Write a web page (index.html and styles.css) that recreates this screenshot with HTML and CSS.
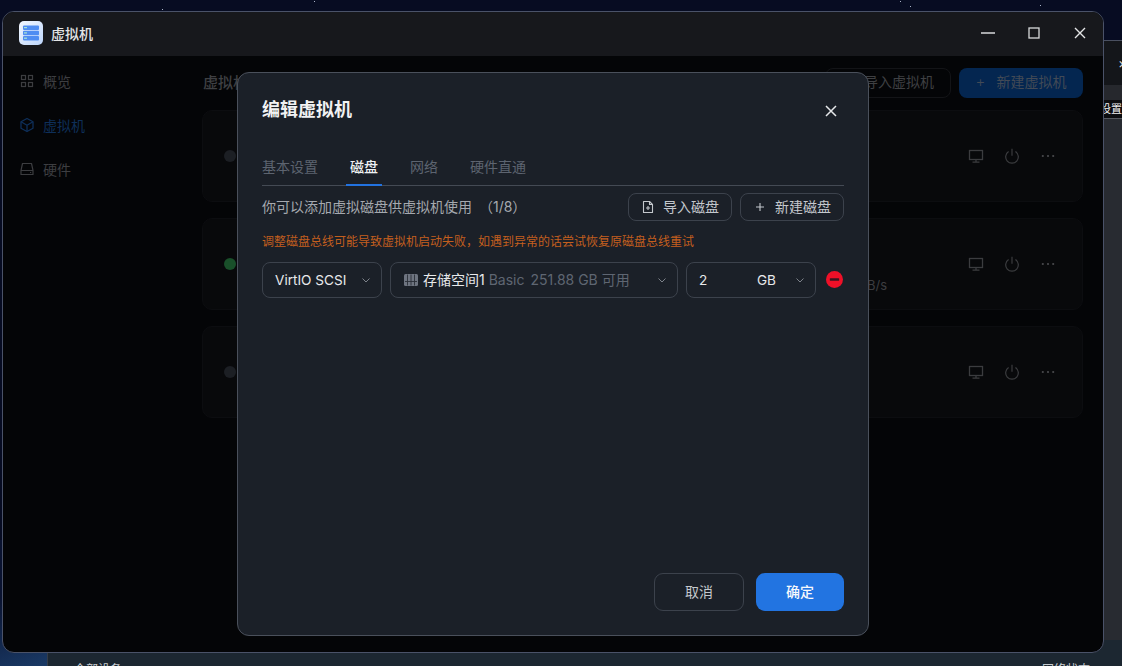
FILE: index.html
```html
<!DOCTYPE html>
<html lang="zh-CN">
<head>
<meta charset="utf-8">
<title>虚拟机</title>
<link rel="stylesheet" href="styles.css">
</head>
<body>
<div class="desktop">
  <i class="star s1"></i><i class="star s2"></i><i class="star s3"></i><i class="star s4"></i><i class="star s5"></i>
  <div class="corner-art"></div>

  <section class="back-window">
    <div class="back-head"><span class="back-close">×</span></div>
    <div class="back-strip"></div>
    <div class="back-tab">设置</div>
    <div class="back-body"></div>
  </section>

  <section class="bottom-window">
    <span class="bottom-left">全部设备</span>
    <span class="bottom-right">网络状态</span>
  </section>

  <section class="window">
    <header class="titlebar">
      <svg class="app-icon" viewBox="0 0 24 24" width="24" height="24">
        <defs>
          <linearGradient id="appbg" x1="0" y1="0" x2="1" y2="1"><stop offset="0" stop-color="#f4f8ff"/><stop offset="1" stop-color="#bcd5fb"/></linearGradient>
        </defs>
        <rect width="24" height="24" rx="5" fill="url(#appbg)"/>
        <rect x="4" y="4.5" width="16" height="4.4" rx="1" fill="#4f8df2"/>
        <rect x="4" y="9.8" width="16" height="4.4" rx="1" fill="#4f8df2"/>
        <rect x="4" y="15.1" width="16" height="4.4" rx="1" fill="#4f8df2"/>
        <rect x="5" y="6" width="3" height="1.2" fill="#a9e6d0"/>
        <rect x="5" y="11.3" width="3" height="1.2" fill="#a9e6d0"/>
        <rect x="5" y="16.6" width="3" height="1.2" fill="#a9e6d0"/>
      </svg>
      <span class="app-name">虚拟机</span>
      <div class="win-controls">
        <svg viewBox="0 0 16 16" width="16" height="16"><path d="M1 8h14" stroke="#d8d9db" stroke-width="1.4"/></svg>
        <svg viewBox="0 0 16 16" width="16" height="16"><rect x="3" y="3" width="10" height="10" fill="none" stroke="#d8d9db" stroke-width="1.3"/></svg>
        <svg viewBox="0 0 16 16" width="16" height="16"><path d="M3 3l10 10M13 3L3 13" stroke="#e4e5e7" stroke-width="1.4"/></svg>
      </div>
    </header>
    <div class="win-body">
      <nav class="sidebar">
        <a class="nav-item">
          <svg viewBox="0 0 16 16" width="16" height="16" fill="none" stroke="#3c3d40" stroke-width="1.2"><rect x="2.5" y="2.5" width="4" height="4"/><rect x="9.5" y="2.5" width="4" height="4"/><rect x="2.5" y="9.5" width="4" height="4"/><rect x="9.5" y="9.5" width="4" height="4"/></svg>
          <span>概览</span>
        </a>
        <a class="nav-item active">
          <svg viewBox="0 0 16 16" width="16" height="16" fill="none" stroke="#0e2f59" stroke-width="1.3" stroke-linejoin="round"><path d="M8 1.5l6 3.3v6.4l-6 3.3-6-3.3V4.8z"/><path d="M2 4.8l6 3.4 6-3.4M8 8.2v6.3"/></svg>
          <span>虚拟机</span>
        </a>
        <a class="nav-item">
          <svg viewBox="0 0 16 16" width="16" height="16" fill="none" stroke="#3c3d40" stroke-width="1.2" stroke-linejoin="round"><path d="M3.5 2.5h9l1.5 7v4H2v-4z"/><path d="M2 9.5h12"/><path d="M11 11.5h1.2"/></svg>
          <span>硬件</span>
        </a>
      </nav>
      <main class="content">
        <div class="content-head">
          <h2 class="content-title">虚拟机</h2>
          <div class="content-actions">
            <button class="bg-btn ghost">导入虚拟机</button>
            <button class="bg-btn primary"><span class="plus">+</span>新建虚拟机</button>
          </div>
        </div>
        <div class="vm-list">
          <article class="vm-card">
            <i class="dot"></i>
            <div class="vm-tools">
              <svg class="tool" viewBox="0 0 16 16" width="16" height="16" fill="none" stroke="#3b3c3f" stroke-width="1.3"><rect x="1.5" y="2.5" width="13" height="9"/><path d="M8 11.5v2.5M4.5 14.2h7"/></svg>
              <svg class="tool" viewBox="0 0 16 16" width="16" height="16" fill="none" stroke="#3b3c3f" stroke-width="1.2"><path d="M4.6 3.6a6.3 6.3 0 1 0 6.8 0"/><path d="M8 .8v7"/></svg>
              <svg class="tool" viewBox="0 0 16 16" width="16" height="16" fill="#4a4b4e"><circle cx="2.8" cy="8" r="1.1"/><circle cx="8" cy="8" r="1.1"/><circle cx="13.2" cy="8" r="1.1"/></svg>
            </div>
          </article>
          <article class="vm-card">
            <i class="dot on"></i>
            <span class="vm-speed">B/s</span>
            <div class="vm-tools">
              <svg class="tool" viewBox="0 0 16 16" width="16" height="16" fill="none" stroke="#3b3c3f" stroke-width="1.3"><rect x="1.5" y="2.5" width="13" height="9"/><path d="M8 11.5v2.5M4.5 14.2h7"/></svg>
              <svg class="tool" viewBox="0 0 16 16" width="16" height="16" fill="none" stroke="#3b3c3f" stroke-width="1.2"><path d="M4.6 3.6a6.3 6.3 0 1 0 6.8 0"/><path d="M8 .8v7"/></svg>
              <svg class="tool" viewBox="0 0 16 16" width="16" height="16" fill="#4a4b4e"><circle cx="2.8" cy="8" r="1.1"/><circle cx="8" cy="8" r="1.1"/><circle cx="13.2" cy="8" r="1.1"/></svg>
            </div>
          </article>
          <article class="vm-card">
            <i class="dot"></i>
            <div class="vm-tools">
              <svg class="tool" viewBox="0 0 16 16" width="16" height="16" fill="none" stroke="#3b3c3f" stroke-width="1.3"><rect x="1.5" y="2.5" width="13" height="9"/><path d="M8 11.5v2.5M4.5 14.2h7"/></svg>
              <svg class="tool" viewBox="0 0 16 16" width="16" height="16" fill="none" stroke="#3b3c3f" stroke-width="1.2"><path d="M4.6 3.6a6.3 6.3 0 1 0 6.8 0"/><path d="M8 .8v7"/></svg>
              <svg class="tool" viewBox="0 0 16 16" width="16" height="16" fill="#4a4b4e"><circle cx="2.8" cy="8" r="1.1"/><circle cx="8" cy="8" r="1.1"/><circle cx="13.2" cy="8" r="1.1"/></svg>
            </div>
          </article>
        </div>
      </main>
    </div>
  </section>

  <section class="modal">
    <div class="modal-head">
      <h1 class="modal-title">编辑虚拟机</h1>
      <svg class="modal-close" viewBox="0 0 16 16" width="16" height="16"><path d="M3 3l10 10M13 3L3 13" stroke="#e6e8ea" stroke-width="1.5"/></svg>
    </div>
    <div class="tabs">
      <span class="tab">基本设置</span>
      <span class="tab current">磁盘</span>
      <span class="tab">网络</span>
      <span class="tab">硬件直通</span>
    </div>
    <div class="toolbar">
      <span class="hint">你可以添加虚拟磁盘供虚拟机使用 （1/8）</span>
      <div class="toolbar-btns">
        <button class="btn small">
          <svg viewBox="0 0 14 14" width="14" height="14" fill="none" stroke="#c4c8cd" stroke-width="1.1" stroke-linejoin="round"><path d="M2.5 1.5h6l3 3v8h-9z"/><path d="M8.5 1.5v3h3M7 6v4M5 8h4"/></svg>
          <span class="btn-label">导入磁盘</span>
        </button>
        <button class="btn small">
          <svg viewBox="0 0 14 14" width="14" height="14" fill="none" stroke="#c4c8cd" stroke-width="1.1"><path d="M7 3v8M3 7h8"/></svg>
          <span class="btn-label">新建磁盘</span>
        </button>
      </div>
    </div>
    <p class="warning">调整磁盘总线可能导致虚拟机启动失败，如遇到异常的话尝试恢复原磁盘总线重试</p>
    <div class="disk-row">
      <div class="select bus">
        <span class="value">VirtIO SCSI</span>
        <svg class="chev" viewBox="0 0 10 10" width="10" height="10" fill="none" stroke="#7d828a" stroke-width="1"><path d="M1.5 3.5L5 7l3.5-3.5"/></svg>
      </div>
      <div class="select pool">
        <svg class="pool-icon" viewBox="0 0 14 14" width="14" height="14"><rect x="0" y="1" width="14" height="12" rx="1.5" fill="#6e7480"/><path d="M3.5 1.5v11M7 1.5v11M10.5 1.5v11M1 8.5h12" stroke="#2a2f38" stroke-width=".9"/></svg>
        <span class="pool-name">存储空间1</span>
        <span class="muted"><span class="muted-kind">Basic</span> 251.88 GB 可用</span>
        <svg class="chev" viewBox="0 0 10 10" width="10" height="10" fill="none" stroke="#7d828a" stroke-width="1"><path d="M1.5 3.5L5 7l3.5-3.5"/></svg>
      </div>
      <div class="select size">
        <span class="value">2</span>
        <span class="value unit">GB</span>
        <svg class="chev" viewBox="0 0 10 10" width="10" height="10" fill="none" stroke="#7d828a" stroke-width="1"><path d="M1.5 3.5L5 7l3.5-3.5"/></svg>
      </div>
      <svg class="remove" viewBox="0 0 16 16" width="17" height="17"><circle cx="8" cy="8" r="8" fill="#ef1028"/><rect x="3.6" y="6.8" width="8.8" height="2.4" rx=".6" fill="#3a1620"/></svg>
    </div>
    <div class="modal-foot">
      <button class="btn cancel">取消</button>
      <button class="btn ok">确定</button>
    </div>
  </section>
</div>
</body>
</html>
```
FILE: styles.css
```css
* { box-sizing: border-box; }
html, body { margin: 0; padding: 0; }
body {
  font-family: "Inter", "Noto Sans CJK SC", sans-serif;
  overflow: hidden;
  background: #070d24;
}
svg { display: block; flex: none; }
button { font: inherit; }

.desktop {
  position: relative;
  width: 1122px;
  height: 666px;
  overflow: hidden;
  background: #070c22;
}
.star { position: absolute; width: 1px; height: 1px; background: #aab3c8; }
.s1 { left: 314px; top: 1px; }
.s2 { left: 162px; top: 9px; }
.s3 { left: 900px; top: 1px; }
.s4 { left: 1040px; top: 5px; }
.s5 { left: 910px; top: 6px; }
.corner-art {
  position: absolute; left: 0; top: 540px; width: 48px; height: 126px;
  background: linear-gradient(160deg, #0a1330 40%, #1a3a66 100%);
}

.back-window {
  position: absolute; left: 1090px; top: 40px; width: 60px; height: 626px;
  display: flex; flex-direction: column;
  border-top: 1px solid #4a5060;
  background: #282b31;
}
.back-head { height: 44px; background: #14161a; padding: 15px 0 0 28px; color: #d8d9db; font-size: 14px; line-height: 14px; }
.back-close { display: block; }
.back-strip { height: 15px; background: #26282d; }
.back-tab {
  height: 19px; background: #0c0d10; color: #f0f0f0; font-size: 11px; line-height: 18px;
  padding-left: 10px; border-bottom: 1px solid #55585e; white-space: nowrap;
}
.back-body { flex: 1; background: #282b31; }

.bottom-window {
  position: absolute; left: 47px; top: 640px; width: 1075px; height: 26px;
  background: #1c2731; color: #c8ccd0; font-size: 12px;
  border-left: 1px solid #343c48;
}
.bottom-left { position: absolute; left: 26px; top: 20px; }
.bottom-right { position: absolute; left: 994px; top: 20px; }

.window {
  position: absolute; left: 2px; top: 11px; width: 1102px; height: 642px;
  display: flex; flex-direction: column;
  background: #040507;
  border: 1px solid #4a5268;
  border-radius: 12px;
  overflow: hidden;
}
.titlebar {
  height: 44px; flex: none;
  display: flex; align-items: center;
  padding: 0 15px 2px 16px;
  background: #17181c;
}
.app-icon { margin-right: 8px; }
.app-name { font-size: 14px; font-weight: 500; color: #e3e4e6; }
.win-controls { margin-left: auto; display: flex; gap: 30px; }

.win-body { flex: 1; display: flex; min-height: 0; }
.sidebar { width: 199px; flex: none; padding-top: 9px; display: flex; flex-direction: column; gap: 12px; }
.nav-item {
  height: 32px; display: flex; align-items: center; gap: 8px;
  padding-left: 16px; font-size: 14px; color: #3d3e41;
}
.nav-item.active { color: #0e2f59; }

.content { flex: 1; padding: 12px 20px 0 0; }
.content-head { display: flex; justify-content: space-between; align-items: center; height: 30px; }
.content-title { margin: 0 0 4px 1px; font-size: 15px; font-weight: 500; color: #3f4043; }
.content-actions { display: flex; gap: 8px; }
.bg-btn {
  height: 30px; border-radius: 8px; font-size: 14px; color: #3f4043;
  display: flex; align-items: center; justify-content: center;
  padding: 0 0 4px;
}
.bg-btn.ghost { width: 126px; justify-content: flex-end; padding-right: 16px; background: transparent; border: 1px solid #131417; }
.bg-btn.primary { width: 124px; background: #042650; border: 0; color: #424a56; }
.plus { margin-right: 11px; font-size: 15px; font-weight: 300; }
.vm-list { margin-top: 12px; display: flex; flex-direction: column; gap: 16px; }
.vm-card {
  position: relative;
  height: 92px; border-radius: 10px;
  background: #08090b;
  border: 1px solid #0c0d10;
  display: flex; align-items: center;
  padding: 0 26px 0 21px;
}
.dot { width: 12px; height: 12px; border-radius: 50%; background: #1c1f24; }
.dot.on { background: #19502a; }
.vm-speed { position: absolute; left: 664px; top: 58px; font-size: 13px; color: #3c3d40; }
.vm-tools { margin-left: auto; display: flex; gap: 20px; }
.tool { width: 16px; height: 16px; }

.modal {
  position: absolute; left: 237px; top: 72px; width: 632px; height: 564px;
  display: flex; flex-direction: column;
  padding: 0 24px 24px;
  background: #1b2028;
  border: 1px solid #4a505b;
  border-radius: 12px;
  color: #e8e9eb;
}
.modal-head { height: 74px; flex: none; display: flex; align-items: center; justify-content: space-between; }
.modal-title { margin: 0 0 4px; font-size: 18px; font-weight: 600; color: #f1f2f3; }
.modal-close { margin: 2px 5px 0 0; }
.tabs {
  height: 39px; flex: none;
  display: flex; gap: 32px;
  border-bottom: 1px solid #444a54;
}
.tab { position: relative; font-size: 14px; line-height: 20px; padding-top: 10px; color: #5d6470; }
.tab.current { color: #eef0f2; font-weight: 500; }
.tab.current::after {
  content: ""; position: absolute; left: -4px; right: -4px; bottom: -1px; height: 2px; background: #2272e0;
}
.toolbar { flex: none; height: 28px; margin-top: 7px; display: flex; align-items: center; justify-content: space-between; }
.hint { font-size: 14px; color: #a5a9af; margin-bottom: 2px; word-spacing: 3px; }
.toolbar-btns { display: flex; gap: 8px; }
.btn {
  border: 1px solid #3c424c; border-radius: 8px; background: transparent; color: #c4c8cd;
  display: flex; align-items: center; justify-content: center;
}
.btn.small { width: 104px; height: 28px; font-size: 14px; gap: 8px; padding: 0; }
.btn-label { margin-bottom: 2px; }
.warning { margin: 13px 0 0; font-size: 12px; line-height: 16px; color: #c45f1e; }
.disk-row { flex: none; margin-top: 12px; display: flex; gap: 8px; align-items: flex-start; }
.select {
  position: relative; height: 36px; border: 1px solid #3c424c; border-radius: 8px;
  display: flex; align-items: center; font-size: 14px; padding: 0 12px;
}
.select .chev { position: absolute; right: 10px; top: 12px; }
.select.bus { width: 120px; }
.select.pool { width: 288px; padding-left: 13px; }
.select.size { width: 130px; }
.value { color: #e8e9eb; white-space: nowrap; font-size: 13.6px; }
.unit { margin-left: auto; margin-right: 27px; }
.pool-name { color: #e8e9eb; white-space: nowrap; font-size: 14px; margin: 0 4px 2px 5px; }
.muted { color: #5f6672; font-size: 14px; white-space: nowrap; margin-bottom: 2px; }
.muted-kind { margin-right: 2px; }
.remove { margin: 9px 0 0 2px; }
.modal-foot { margin-top: auto; display: flex; justify-content: flex-end; gap: 12px; }
.btn.cancel { width: 90px; height: 38px; font-size: 14px; border-radius: 9px; padding: 0 0 2px; }
.btn.ok { width: 88px; height: 38px; font-size: 14px; border: 0; border-radius: 9px; padding: 0 0 2px; background: #2274e1; color: #f7f9fc; font-weight: 500; }
```
